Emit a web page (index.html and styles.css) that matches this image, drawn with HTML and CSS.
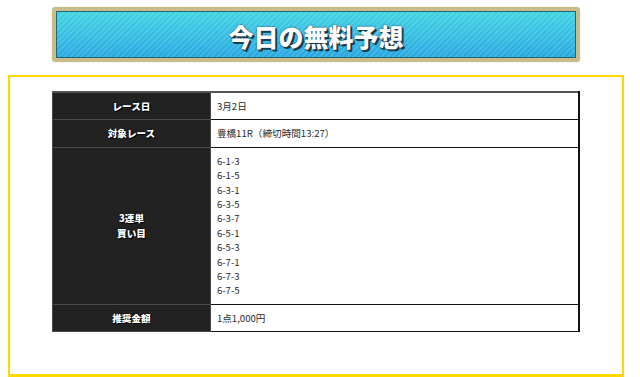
FILE: index.html
```html
<!DOCTYPE html>
<html lang="ja">
<head>
<meta charset="utf-8">
<title>今日の無料予想</title>
<link rel="stylesheet" href="styles.css">
</head>
<body>
<div class="page">
  <div class="banner">
    <div class="banner-inner"><h2 class="banner-title">今日の無料予想</h2></div>
  </div>
  <div class="box">
    <table class="yoso">
      <tr><th>レース日</th><td>3月2日</td></tr>
      <tr><th>対象レース</th><td>豊橋11R（締切時間13:27）</td></tr>
      <tr><th>3連単<br>買い目</th><td>6-1-3<br>6-1-5<br>6-3-1<br>6-3-5<br>6-3-7<br>6-5-1<br>6-5-3<br>6-7-1<br>6-7-3<br>6-7-5</td></tr>
      <tr><th>推奨金額</th><td>1点1,000円</td></tr>
    </table>
  </div>
</div>
</body>
</html>
```

FILE: styles.css
```css
html, body {
  margin: 0;
  padding: 0;
  background: #fff;
}
body {
  font-family: "Noto Sans CJK JP", "Noto Sans", sans-serif;
}
.page {
  width: 632px;
}
.banner {
  width: 528px;
  height: 55px;
  margin: 7px auto 0;
  box-sizing: border-box;
  border: 4px solid #c8bc8a;
  border-radius: 4px;
  box-shadow: inset 0 0 0 1px #b0a470, 0 0 1px #a89c68;
  background: #c8bc8a;
}
.banner-inner {
  height: 100%;
  box-sizing: border-box;
  border: 1px solid #1c6878;
  background:
    repeating-linear-gradient(135deg, rgba(255,255,255,0.12) 0 2px, rgba(255,255,255,0) 2px 4px),
    linear-gradient(180deg, #3fd2e2 0%, #33bde3 55%, #28a6e0 100%);
  display: flex;
  align-items: center;
  justify-content: center;
}
.banner-title {
  margin: 3px 0 0;
  font-size: 25px;
  font-weight: 900;
  color: #fff;
  line-height: 1;
  text-shadow: 1px 1px 0 #1a3a4a, 2px 2px 0 #1a3a4a, 0 0 2px #1a3a4a;
}
.box {
  margin: 13px 8px 0;
  border: 2px solid #ffd800;
  border-bottom-width: 3px;
  padding: 14px 42px 42px;
}
.yoso {
  width: 528px;
  border-collapse: collapse;
  font-size: 9.6px;
  line-height: 14.4px;
}
.yoso th {
  width: 30%;
  background: #222;
  color: #fff;
  font-weight: 900;
  text-align: center;
  vertical-align: middle;
  padding: 6px 7px;
  border: 1px solid #4a4a4a;
  text-shadow: 1px 1px 0 #000, 0 0 2px #000;
}
.yoso td {
  background: #fff;
  color: #2a2a2a;
  padding: 6px 6px;
  border: 1px solid #111;
  border-right-width: 2px;
  text-align: left;
}
.yoso tr:first-child th,
.yoso tr:first-child td {
  border-top: 2px solid #555;
}
```
